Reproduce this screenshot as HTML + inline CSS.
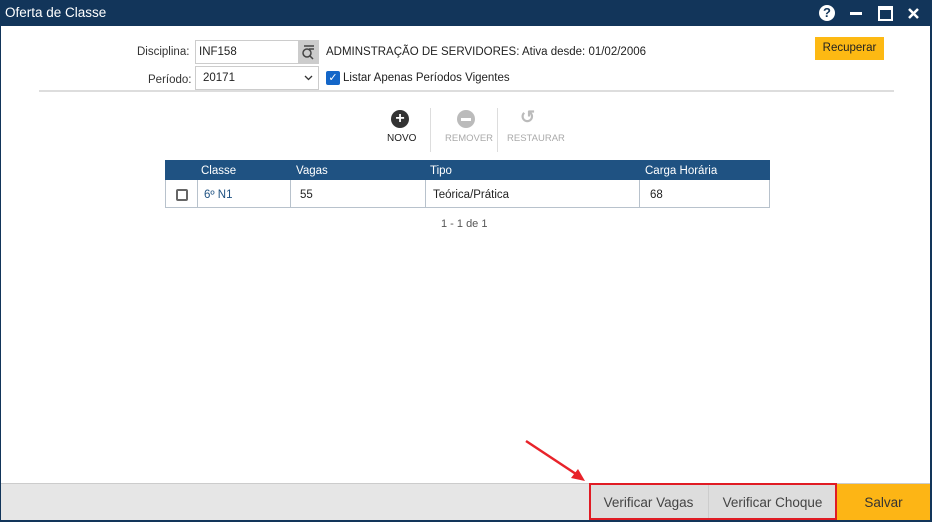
<!DOCTYPE html><html><head><meta charset="utf-8"><style>
*{box-sizing:border-box;margin:0;padding:0}
body{width:932px;height:522px;background:#12355a;font-family:"Liberation Sans",sans-serif;position:relative;overflow:hidden;font-size:11.5px;color:#222}
.abs{position:absolute}
#main{left:1px;top:26px;width:929px;height:494px;background:#fff}
.t{position:absolute;white-space:nowrap}
</style></head><body>
<div class="t" style="left:5px;top:5px;color:#fff;font-size:13.5px">Oferta de Classe</div>
<div class="abs" style="left:819px;top:5px;width:16px;height:16px;border-radius:50%;background:#fff;color:#12355a;font-weight:bold;font-size:13px;text-align:center;line-height:16px">?</div>
<div class="abs" style="left:850px;top:12px;width:12px;height:3px;background:#fff"></div>
<div class="abs" style="left:878px;top:6px;width:15px;height:15px;border:2px solid #fff;border-top-width:4px"></div>
<svg class="abs" style="left:908px;top:8px" width="11" height="11"><path d="M1 1L10 10M10 1L1 10" stroke="#fff" stroke-width="2.5"/></svg>
<div id="main" class="abs">
<div class="t" style="left:136px;top:20px;color:#333">Disciplina:</div>
<div class="abs" style="left:194px;top:14px;width:124px;height:24px;border:1px solid #ccc"></div>
<div class="abs" style="left:297px;top:15px;width:20px;height:22px;background:#ccc"><svg width="20" height="22"><circle cx="9" cy="12" r="4" fill="none" stroke="#444" stroke-width="1.5"/><path d="M12 15l3 3M6 5h10M11 8h5" stroke="#444" stroke-width="1.5"/></svg></div>
<div class="t" style="left:198px;top:20px">INF158</div>
<div class="t" style="left:325px;top:20px">ADMINSTRAÇÃO DE SERVIDORES: Ativa desde: 01/02/2006</div>
<div class="abs" style="left:814px;top:11px;height:23px;width:69px;background:#fdb913;text-align:center;line-height:23px">Recuperar</div>
<div class="t" style="left:147px;top:48px;color:#333">Período:</div>
<div class="abs" style="left:194px;top:40px;width:124px;height:24px;border:1px solid #ccc"></div>
<div class="t" style="left:202px;top:46px">20171</div>
<svg class="abs" style="left:303px;top:49px" width="9" height="6"><path d="M1 1l3.5 3.5L8 1" stroke="#333" stroke-width="1.3" fill="none"/></svg>
<div class="abs" style="left:325px;top:45px;width:14px;height:14px;background:#1466c8;border-radius:2px;color:#fff;font-size:11px;text-align:center;line-height:14px">✓</div>
<div class="t" style="left:342px;top:46px">Listar Apenas Períodos Vigentes</div>
<div class="abs" style="left:38px;top:64px;width:855px;height:2px;background:#ddd"></div>
<div class="abs" style="left:390px;top:84px;width:18px;height:18px;border-radius:50%;background:#333;color:#fff;font-weight:bold;text-align:center;line-height:18px;font-size:16px">+</div>
<div class="t" style="left:386px;top:107px;font-size:10px;color:#222">NOVO</div>
<div class="abs" style="left:429px;top:82px;width:1px;height:44px;background:#ddd"></div>
<div class="abs" style="left:456px;top:84px;width:18px;height:18px;border-radius:50%;background:#bbb"><div class="abs" style="left:4px;top:8px;width:10px;height:3px;background:#fff"></div></div>
<div class="t" style="left:444px;top:107px;font-size:9.5px;color:#aaa">REMOVER</div>
<div class="abs" style="left:496px;top:82px;width:1px;height:44px;background:#ddd"></div>
<div class="t" style="left:519px;top:81px;font-size:18px;color:#bbb;font-weight:bold">↺</div>
<div class="t" style="left:506px;top:107px;font-size:9.5px;color:#aaa">RESTAURAR</div>
<div class="abs" style="left:164px;top:134px;width:605px;height:20px;background:#1f5282"></div>
<div class="t" style="left:200px;top:139px;color:#fff">Classe</div>
<div class="t" style="left:295px;top:139px;color:#fff">Vagas</div>
<div class="t" style="left:429px;top:139px;color:#fff">Tipo</div>
<div class="t" style="left:644px;top:139px;color:#fff">Carga Horária</div>
<div class="abs" style="left:164px;top:154px;width:605px;height:28px;border:1px solid #b8c2cc;border-top:none"></div>
<div class="abs" style="left:196px;top:154px;width:1px;height:27px;background:#b8c2cc"></div>
<div class="abs" style="left:289px;top:154px;width:1px;height:27px;background:#b8c2cc"></div>
<div class="abs" style="left:424px;top:154px;width:1px;height:27px;background:#b8c2cc"></div>
<div class="abs" style="left:638px;top:154px;width:1px;height:27px;background:#b8c2cc"></div>
<div class="abs" style="left:175px;top:163px;width:12px;height:12px;border:2px solid #666;border-radius:2px"></div>
<div class="t" style="left:203px;top:163px;color:#1f5282">6º N1</div>
<div class="t" style="left:299px;top:163px">55</div>
<div class="t" style="left:432px;top:163px">Teórica/Prática</div>
<div class="t" style="left:649px;top:163px">68</div>
<div class="t" style="left:440px;top:192px;font-size:11px;color:#555">1 - 1 de 1</div>
<div class="abs" style="left:0;top:457px;width:929px;height:37px;background:#e6e6e6;border-top:1px solid #ccc"></div>
<div class="abs" style="left:588px;top:458px;width:119px;height:36px;background:#ddd;text-align:center;line-height:38px;font-size:13.5px;color:#444">Verificar Vagas</div>
<div class="abs" style="left:707px;top:458px;width:128px;height:36px;background:#ddd;border-left:1px solid #ccc;text-align:center;line-height:38px;font-size:13.5px;color:#444">Verificar Choque</div>
<div class="abs" style="left:588px;top:457px;width:248px;height:37px;border:2px solid #e01b24"></div>
<div class="abs" style="left:836px;top:458px;width:93px;height:36px;background:#fdb515;text-align:center;line-height:38px;font-size:13.5px;color:#333">Salvar</div>
<svg class="abs" style="left:520px;top:410px" width="70" height="50"><line x1="5" y1="5" x2="58" y2="40" stroke="#e8232a" stroke-width="2.5"/><polygon points="64,45 50,42 57,33" fill="#e8232a"/></svg>
</div>
</body></html>
